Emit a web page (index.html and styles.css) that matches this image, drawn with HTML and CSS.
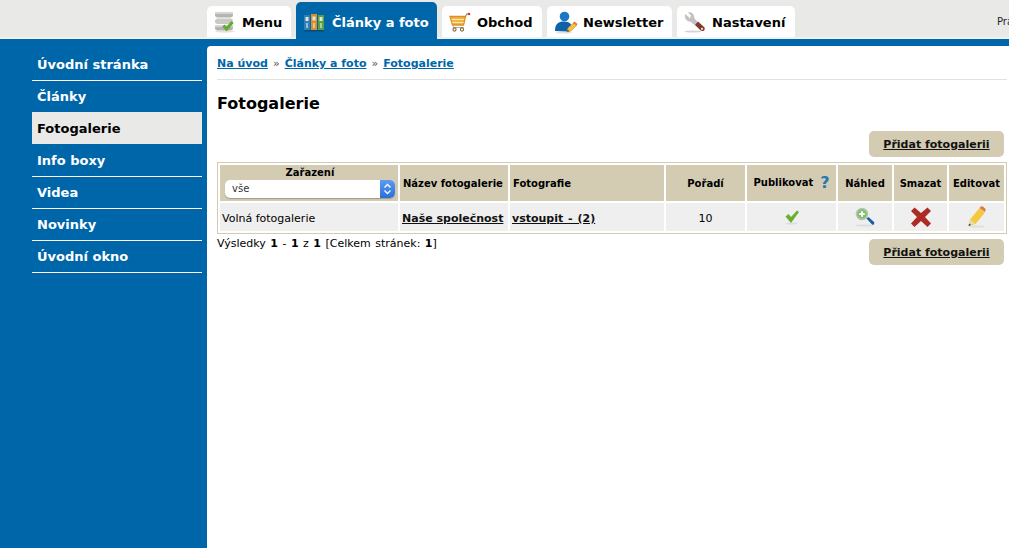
FILE: index.html
```html
<!DOCTYPE html>
<html lang="cs">
<head>
<meta charset="utf-8">
<title>Fotogalerie</title>
<link rel="stylesheet" href="styles.css">
</head>
<body>
<header class="topbar">
  <a class="tab tab-menu" href="#">
    <svg class="tab-icon" width="22" height="22" viewBox="0 0 22 22"><ellipse cx="11" cy="20.500" rx="10" ry="1.200" fill="#e2e2e2"/><rect x="1" y="1" width="18" height="5.500" rx="2.700" fill="#b4b4b1"/><rect x="1" y="1" width="18" height="2" rx="1" fill="#d6d6d4"/><rect x="1" y="7.500" width="18" height="5.500" rx="2.700" fill="#c9c9c6"/><rect x="1" y="14" width="18" height="5.500" rx="2.700" fill="#b4b4b1"/><rect x="1" y="14" width="18" height="2" rx="1" fill="#d6d6d4"/><path d="M9.500 14.500l3 3.500 6-7" fill="none" stroke="#67ad2c" stroke-width="3.200"/></svg>
    <span>Menu</span>
  </a>
  <a class="tab tab-active" href="#">
    <svg class="tab-icon" width="20" height="18" viewBox="0 0 20 18"><rect x="0" y="1" width="6" height="15" fill="#2f7fb8"/><rect x="7" y="0" width="6" height="16" fill="#d98f30"/><rect x="14" y="1" width="6" height="15" fill="#56a04a"/><rect x="1.500" y="3" width="3" height="4" fill="#e8e5cf"/><rect x="8.500" y="2.500" width="3" height="4" fill="#e8e5cf"/><rect x="15.500" y="3" width="3" height="4" fill="#e8e5cf"/><rect x="2" y="9" width="2" height="5" fill="#8fc0e0"/><rect x="9" y="9" width="2" height="5" fill="#f0c27c"/><rect x="16" y="9" width="2" height="5" fill="#a4d09a"/><rect x="0" y="16" width="20" height="1.500" fill="#0a4a78"/></svg>
    <span>Články a foto</span>
  </a>
  <a class="tab tab-shop" href="#">
    <svg class="tab-icon" width="22" height="20" viewBox="0 0 22 20"><path d="M1 4.500h15.500l-2 8.500H3.500z" fill="#f2b547" stroke="#e08f1f" stroke-width="1.300"/><path d="M2.500 7.500h12.500M3 10.500h11.500" stroke="#fbe6b0" stroke-width="1"/><path d="M16.500 4.500l1.200-2.500h2" fill="none" stroke="#777" stroke-width="1"/><circle cx="20" cy="2" r="1.300" fill="#c8392e"/><path d="M4 13.500l.5 2h10" fill="none" stroke="#aaa" stroke-width="1"/><circle cx="5.500" cy="17.500" r="1.600" fill="none" stroke="#8a6a3a" stroke-width="1.100"/><circle cx="13" cy="17.500" r="1.600" fill="none" stroke="#8a6a3a" stroke-width="1.100"/></svg>
    <span>Obchod</span>
  </a>
  <a class="tab tab-news" href="#">
    <svg class="tab-icon" width="23" height="23" viewBox="0 0 23 23"><ellipse cx="9" cy="21.500" rx="8" ry="1" fill="#e2e2e2"/><circle cx="9.500" cy="5.500" r="4.800" fill="#1b78c4"/><path d="M0 20c0-7 3-9.500 9-9.500 3.500 0 6 1 7.500 3.500l-4 6.500z" fill="#0f62a8"/><path d="M12 21l1-4 6-5.500 3 2.500-6 6z" fill="#f3c23c" stroke="#c9922a" stroke-width=".6"/><path d="M18 12l1.500-1.500 3 2.500-1 1.500z" fill="#d97b4b"/><path d="M12 21l.7-2.500 1.800 1.700z" fill="#555"/></svg>
    <span>Newsletter</span>
  </a>
  <a class="tab tab-set" href="#">
    <svg class="tab-icon" width="22" height="22" viewBox="0 0 22 22"><ellipse cx="9" cy="20.500" rx="8.500" ry="1" fill="#d5d5d5"/><path d="M1.500 3c-1.500 3 0 6.500 3.500 7.500l2 .5 4 3.500 3-3-3.500-4-.5-2.500C9.500 2 6.500.5 4 1.500l3 3-1 3z" fill="#c2c2c0"/><path d="M11 14l3-3.500 6 5.500c1 1 1 2.500 0 3.500s-2.500.7-3.500-.2z" fill="#7e3a2a"/><circle cx="18" cy="17.800" r="1.100" fill="#eee"/></svg>
    <span>Nastavení</span>
  </a>
  <span class="user">Pra</span>
</header>
<div class="layout">
  <nav class="sidebar">
    <a class="side-item" href="#">Úvodní stránka</a>
    <a class="side-item side-before" href="#">Články</a>
    <a class="side-item side-active" href="#">Fotogalerie</a>
    <a class="side-item" href="#">Info boxy</a>
    <a class="side-item" href="#">Videa</a>
    <a class="side-item" href="#">Novinky</a>
    <a class="side-item" href="#">Úvodní okno</a>
  </nav>
  <main class="content">
    <div class="crumbs"><a href="#">Na úvod</a><span class="sep">»</span><a href="#">Články a foto</a><span class="sep">»</span><a href="#">Fotogalerie</a></div>
    <h1 class="title">Fotogalerie</h1>
    <div class="actions"><a class="btn" href="#">Přidat fotogalerii</a></div>
    <table class="grid">
      <colgroup>
        <col class="c1"><col class="c2"><col class="c3"><col class="c4"><col class="c5"><col class="c6"><col class="c7"><col class="c8">
      </colgroup>
      <thead>
        <tr>
          <th class="center filter-cell">
            <div class="filter-label">Zařazení</div>
            <div class="select">
              <span class="select-value">vše</span>
              <span class="stepper"><svg width="9" height="14" viewBox="0 0 9 14"><path d="M1.500 5.500L4.500 2.500l3 3M1.500 8.500l3 3 3-3" fill="none" stroke="#fff" stroke-width="1.300"/></svg></span>
            </div>
          </th>
          <th>Název fotogalerie</th>
          <th>Fotografie</th>
          <th class="center">Pořadí</th>
          <th class="center"><span class="pub">Publikovat</span><span class="help">?</span></th>
          <th class="center">Náhled</th>
          <th class="center">Smazat</th>
          <th class="center">Editovat</th>
        </tr>
      </thead>
      <tbody>
        <tr>
          <td>Volná fotogalerie</td>
          <td class="strong"><a href="#">Naše společnost</a></td>
          <td class="strong wide"><a href="#">vstoupit - (2)</a></td>
          <td class="center">10</td>
          <td class="center"><svg class="cell-icon" width="16" height="16" viewBox="0 0 16 16"><ellipse cx="7.500" cy="14.500" rx="6" ry="1" fill="#ddd"/><path d="M1.500 7.500l3-2.500 2.500 3 6-6.500 2 1.500-8 11z" fill="#6ab02f"/></svg></td>
          <td class="center"><svg class="cell-icon" width="22" height="20" viewBox="0 0 22 20"><ellipse cx="10" cy="18.500" rx="9" ry="1" fill="#ddd"/><circle cx="8" cy="7" r="5.500" fill="#7fc06a" stroke="#b9c4b4" stroke-width="1.600"/><path d="M5.300 7h5.400M8 4.300v5.400" stroke="#fff" stroke-width="2"/><path d="M12.500 11.500l2-1.500 6 5.500-1 2.500-1.500-.5z" fill="#135f9f"/></svg></td>
          <td class="center"><svg class="cell-icon" width="22" height="22" viewBox="0 0 22 22"><path d="M1 5l3.500-3.500 6.500 5.500 6.500-5.500 3.500 3.500-6 6 6 6.500-3.500 3.500-6.500-6-6.500 6-3.500-3.500 6-6.500z" fill="#ad2a25"/></svg></td>
          <td class="center"><svg class="cell-icon" width="20" height="22" viewBox="0 0 20 22"><ellipse cx="10" cy="20.500" rx="8" ry="1" fill="#ddd"/><path d="M1.500 20l1.500-6.500 9.500-11.500 5.500 4.500-9.500 11.500z" fill="#f4c93f"/><path d="M12.500 2l1-1.200c.8-.8 1.800-.8 2.600 0l2 1.700c.8.800.8 1.800 0 2.600l-.1 1z" fill="#d97b4b"/><path d="M1.500 20l1.500-6.500 5 4z" fill="#e8d9b5"/><path d="M1.500 20l.6-2.600 2.100 1.600z" fill="#444"/></svg></td>
        </tr>
      </tbody>
    </table>
    <div class="pager-row">
      <div class="pager">Výsledky <b>1</b> - <b>1</b> z <b>1</b> [Celkem stránek: <b>1</b>]</div>
      <a class="btn" href="#">Přidat fotogalerii</a>
    </div>
  </main>
</div>
</body>
</html>
```

FILE: styles.css
```css
* { box-sizing: border-box; }
html, body { margin: 0; height: 100%; }
body {
  height: 548px;
  overflow: hidden;
  background: #0066aa;
  color: #000;
  font-family: "DejaVu Sans", Verdana, sans-serif;
  font-size: 11px;
  display: flex;
  flex-direction: column;
}
a { color: inherit; }

.topbar {
  height: 39px;
  flex: none;
  background: linear-gradient(#e9e9e8 37px, #f1f1f0 37px);
  padding-left: 207px;
  display: flex;
  align-items: flex-start;
  gap: 5px;
  position: relative;
}
.tab {
  height: 31px;
  margin-top: 6px;
  background: #fff;
  border-radius: 5px 5px 0 0;
  display: flex;
  align-items: center;
  text-decoration: none;
  font-weight: bold;
  font-size: 13px;
  color: #000;
  padding-left: 7px;
  padding-top: 1px;
}
.tab-menu { width: 84px; }
.tab-menu span { margin-left: 6px; }
.tab-active {
  width: 141px;
  height: 37px;
  margin-top: 2px;
  background: #0066aa;
  color: #fff;
  padding-left: 8px;
  padding-top: 0;
}
.tab-active span { margin-left: 8px; margin-top: 4px; }
.tab-shop { width: 100px; }
.tab-shop span { margin-left: 6px; }
.tab-news { width: 125px; padding-left: 8px; }
.tab-news span { margin-left: 5px; }
.tab-set { width: 118px; }
.tab-set span { margin-left: 6px; }
.tab-icon { flex: none; }
.tab-active .tab-icon { margin-top: 5px; }
.user {
  position: absolute;
  left: 997px;
  top: 16px;
  font-size: 10px;
  color: #222;
}

.layout {
  flex: 1;
  display: grid;
  grid-template-columns: 207px 1fr;
  min-height: 0;
}
.sidebar {
  padding: 10px 5px 0 32px;
  display: flex;
  flex-direction: column;
}
.side-item {
  height: 32px;
  line-height: 32px;
  padding-left: 5px;
  color: #fff;
  font-weight: bold;
  font-size: 13px;
  text-decoration: none;
  border-bottom: 1px solid #fff;
}
.side-before { border-bottom-color: #e9e9e7; }
.side-active {
  background: #e9e9e7;
  color: #000;
  border-bottom-color: #0066aa;
}

.content {
  margin-top: 7px;
  background: #fff;
  border-radius: 4px 0 0 0;
  padding: 0 2px 0 10px;
}
.crumbs {
  height: 34px;
  padding-top: 10px;
  line-height: 15px;
  font-weight: bold;
  color: #0066aa;
  border-bottom: 1px solid #e2e2e2;
}
.sep {
  font-weight: normal;
  color: #555;
  margin: 0 5px;
}
.title {
  margin: 14px 0 0;
  font-size: 16px;
  line-height: 20px;
  font-weight: bold;
}
.actions {
  margin-top: 17px;
  display: flex;
  justify-content: flex-end;
  padding-right: 3px;
}
.btn {
  width: 135px;
  height: 26px;
  background: #d3ccb3;
  border-radius: 5px;
  display: flex;
  align-items: center;
  justify-content: center;
  font-weight: bold;
  color: #111;
}
.grid {
  width: 790px;
  margin-top: 5px;
  border: 1px solid #d3ccb3;
  border-spacing: 2px;
  border-collapse: separate;
  table-layout: fixed;
}
.c1 { width: 178px; }
.c2 { width: 108px; }
.c3 { width: 154px; }
.c4 { width: 79px; }
.c5 { width: 89px; }
.c6 { width: 54px; }
.c7 { width: 53px; }
.c8 { width: 55px; }
.grid th {
  height: 36px;
  padding: 0 3px;
  background: #d3ccb3;
  text-align: left;
  font-size: 10px;
  font-weight: bold;
  white-space: nowrap;
}
.grid th.center, .grid td.center { text-align: center; }
.grid th.filter-cell { padding: 1px 3px 3px 5px; vertical-align: top; }
.filter-label { line-height: 14px; }
.select {
  height: 18px;
  display: flex;
  background: #fff;
  border-radius: 5px;
  box-shadow: 0 1px 1px #a09a85;
  font-weight: normal;
  font-size: 10px;
  text-align: left;
}
.select-value { flex: 1; padding-left: 7px; line-height: 17px; color: #333; }
.stepper {
  width: 15px;
  background: linear-gradient(#5d9cf0, #2a6fd8);
  border-radius: 0 5px 5px 0;
  display: flex;
  align-items: center;
  justify-content: center;
}
.pub { vertical-align: 2px; }
.help {
  display: inline-block;
  margin-left: 7px;
  font-size: 16px;
  line-height: 16px;
  color: #1f78b4;
}
.grid td {
  height: 28px;
  padding: 2px 2px 0;
  background: #efefef;
  font-size: 11px;
  white-space: nowrap;
}
.grid td.strong { font-weight: bold; color: #111; }
.grid td.wide { word-spacing: 1px; }
.cell-icon { display: block; margin: -2px auto 0; }
.pager-row {
  display: flex;
  justify-content: space-between;
  align-items: flex-start;
  margin-top: 5px;
  padding-right: 3px;
}
.pager { line-height: 9px; font-size: 11px; word-spacing: 1px; }
```
